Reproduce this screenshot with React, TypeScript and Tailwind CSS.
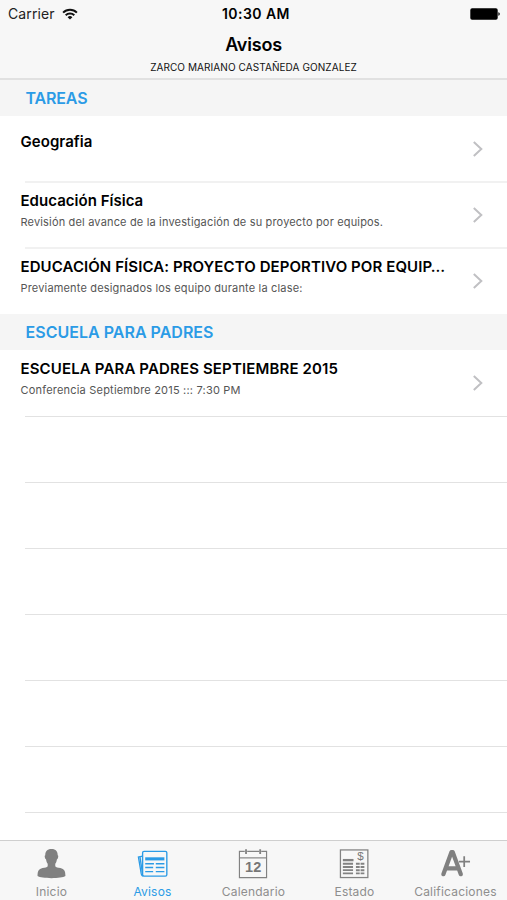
import React from 'react';

interface Notice {
  id: string;
  title: string;
  detail?: string;
  titleClass: string;
  detailClass?: string;
}

interface NoticeSection {
  id: string;
  name: string;
  nameClass: string;
  notices: Notice[];
}

const SECTIONS: NoticeSection[] = [
  {
    id: 'tareas',
    name: 'TAREAS',
    nameClass: 'tracking-[-0.15px]',
    notices: [
      { id: 'geografia', title: 'Geografia', titleClass: 'tracking-[0.05px]' },
      {
        id: 'educacion',
        title: 'Educación Física',
        titleClass: 'tracking-[0.03px]',
        detail: 'Revisión del avance de la investigación de su proyecto por equipos.',
        detailClass: 'tracking-[0.165px]'
      },
      {
        id: 'proyecto',
        title: 'EDUCACIÓN FÍSICA: PROYECTO DEPORTIVO POR EQUIP…',
        titleClass: 'tracking-[0.085px]',
        detail: 'Previamente designados los equipo durante la clase:',
        detailClass: 'tracking-[0.17px]'
      }
    ]
  },
  {
    id: 'escuela',
    name: 'ESCUELA PARA PADRES',
    nameClass: 'tracking-[0.02px]',
    notices: [
      {
        id: 'septiembre',
        title: 'ESCUELA PARA PADRES SEPTIEMBRE 2015',
        titleClass: 'tracking-[0.14px]',
        detail: 'Conferencia Septiembre 2015 ::: 7:30 PM',
        detailClass: 'tracking-[0.2px]'
      }
    ]
  }
];

const EMPTY_ROWS = [1, 2, 3, 4, 5, 6];

const WifiIcon = () => (
  <svg className="w-4 h-3" viewBox="0 0 16 12" fill="none" stroke="#111" strokeWidth="2">
    <path d="M1.1 4.6a9.8 9.8 0 0 1 13.8 0" />
    <path d="M3.7 7.3a6.1 6.1 0 0 1 8.6 0" />
    <path d="M8 11.6 5.6 9.2a3.4 3.4 0 0 1 4.8 0z" fill="#111" stroke="none" />
  </svg>
);

const BatteryIcon = () => (
  <svg className="w-[30px] h-3" viewBox="0 0 30 12">
    <rect x="0.3" y="0.3" width="27.4" height="11.4" rx="1.8" fill="#000" />
    <path d="M28.4 4.2c1.8.5 1.8 3.1 0 3.6z" fill="#000" />
  </svg>
);

const Chevron = () => (
  <svg className="w-[11px] h-4 mb-px shrink-0" viewBox="0 0 11 16" fill="none" stroke="#c0c0c3" strokeWidth="2">
    <path d="M1.8 1 9.300 8l-7.500 7" />
  </svg>
);

const PersonIcon = () => (
  <svg className="w-8 h-8" viewBox="0 0 32 32" fill="#808080">
    <path d="M16.500 1c-4.600 0-6.500 2.600-6.400 6.500-.7.3-.7 1.300-.4 2.400.2 1 .6 1.700 1.200 1.900.3 1.800.8 3.300 1.700 4.400v2.600c-.8 1.200-2.600 1.300-5.300 1.800-4.100.9-5.200 3.200-5.200 8.400 2.200 1.500 7.700 2.200 14.400 2.200s12.200-.7 14.400-2.200c0-5.200-1.100-7.500-5.200-8.400-2.700-.5-4.500-.6-5.300-1.800v-2.600c.9-1.100 1.400-2.600 1.700-4.400.6-.2 1-.9 1.200-1.900.3-1.100.3-2.100-.4-2.400C23 3.600 21.100 1 16.500 1z" />
  </svg>
);

const NewsIcon = () => (
  <svg className="w-8 h-8" viewBox="0 0 32 32" fill="none" stroke="#2b9be6">
    <rect x="6.300" y="3.500" width="25" height="25.500" rx="1.500" strokeWidth="1.400" />
    <path d="M6.300 8.300 2 9.300l2.900 17.200c.3 1.500 1 2.500 2.200 2.500" strokeWidth="1.400" />
    <path d="M3.600 9.500 6 25" strokeWidth="1.400" />
    <path d="M9 11.200h19.800" strokeWidth="3.200" />
    <path d="M9 16.200h9M19.900 16.200h8.900M9 20.200h8.200M19.900 20.200h8.900M9 24.400h8.200M19.900 24.400h8.900" strokeWidth="1.500" />
  </svg>
);

const CalendarIcon = () => (
  <svg className="w-8 h-8" viewBox="0 0 32 32" fill="none" stroke="#828282">
    <path d="M7.500 3.500H2v27h28v-27h-5.500M10 3.500h12.500" strokeWidth="1.200" />
    <path d="M2 10.200h28" strokeWidth="1.200" />
    <path d="M8.800 1.200v5M23.400 1.200v5" strokeWidth="1.900" />
    <text
      x="16.200"
      y="25"
      textAnchor="middle"
      fill="#777"
      stroke="none"
      className="font-['Liberation_Sans',sans-serif] text-[15px] font-bold"
    >
      12
    </text>
  </svg>
);

const InvoiceIcon = () => (
  <svg className="w-8 h-8" viewBox="0 0 32 32" fill="none" stroke="#828282">
    <rect x="2" y="2" width="28.300" height="28.500" strokeWidth="1.300" />
    <path d="M4.500 12.500h11" strokeWidth="2.400" />
    <path d="M4.500 16.300h10.500M4.500 19.600h10.500M4.500 22.900h10.500M4.500 26.200h10.500" strokeWidth="1.900" />
    <path d="M18 16.300h8.700M18 19.600h8.700M18 22.900h8.700M18 26.200h8.700" strokeWidth="2" strokeDasharray="3.900 .9" />
    <text
      x="22.700"
      y="12.500"
      textAnchor="middle"
      fill="#777"
      stroke="none"
      className="font-['Liberation_Sans',sans-serif] text-[12px]"
    >
      $
    </text>
  </svg>
);

const GradeIcon = () => (
  <svg className="w-8 h-8" viewBox="0 0 32 32" fill="none" stroke="#808080" strokeLinecap="round" strokeLinejoin="round">
    <path d="M4 27 12.400 4.200h1.200L22 27M7.500 21h11" strokeWidth="4.400" />
    <path d="M20 14h11.500M25.500 8.500v11" strokeWidth="1.800" strokeLinecap="butt" />
  </svg>
);

const TABS = [
  { id: 'inicio', label: 'Inicio', Icon: PersonIcon },
  { id: 'avisos', label: 'Avisos', Icon: NewsIcon },
  { id: 'calendario', label: 'Calendario', Icon: CalendarIcon },
  { id: 'estado', label: 'Estado', Icon: InvoiceIcon },
  { id: 'calificaciones', label: 'Calificaciones', Icon: GradeIcon }
];

const NoticeRow: React.FC<{ notice: Notice }> = ({ notice }) => (
  <div className="h-[66px] flex items-center justify-between pl-[20.5px] pr-6">
    <div className={`whitespace-nowrap ${notice.detail ? 'pb-[7px]' : 'pb-3.5'}`}>
      <h3 className={`text-[15px] leading-5 font-semibold text-black ${notice.titleClass}`}>{notice.title}</h3>
      {notice.detail && (
        <p className={`mt-px text-[11px] leading-5 text-[#555] ${notice.detailClass}`}>{notice.detail}</p>
      )}
    </div>
    <Chevron />
  </div>
);

export default function App() {
  const activeTab = 'avisos';

  return (
    <div className="h-[900px] w-[507px] flex flex-col overflow-hidden bg-white font-['Inter',sans-serif]">
      {/* Status bar + title */}
      <header className="h-20 shrink-0 bg-[#f7f7f7] border-b-2 border-[#e1e1e1]">
        <div className="h-[27px] grid grid-cols-3 items-center pl-2 pr-[7px]">
          <div className="flex items-center gap-[7px] text-[14px] text-[#222] tracking-[0.1px]">
            <span>Carrier</span>
            <WifiIcon />
          </div>
          <span className="pl-1 text-center text-[14px] font-semibold text-black tracking-[0.45px]">10:30 AM</span>
          <div className="flex justify-end">
            <BatteryIcon />
          </div>
        </div>
        <h1 className="mt-2 text-center text-[18px] leading-5 font-semibold text-black tracking-[-0.2px]">Avisos</h1>
        <p className="mt-1 text-center text-[10px] leading-4 text-[#111] tracking-[0.08px]">
          ZARCO MARIANO CASTAÑEDA GONZALEZ
        </p>
      </header>

      <main className="flex-1 min-h-0 overflow-hidden">
        {SECTIONS.map(section => (
          <section key={section.id}>
            <h2
              className={`h-9 flex items-center pl-[25.5px] bg-[#f5f5f5] text-[16px] font-semibold text-[#2b9be6] ${section.nameClass}`}
            >
              {section.name}
            </h2>
            {section.notices.map((notice, index) => (
              <React.Fragment key={notice.id}>
                {index > 0 && <div className="-my-px ml-[25px] h-0.5 bg-[#f1f1f1]" />}
                <NoticeRow notice={notice} />
              </React.Fragment>
            ))}
          </section>
        ))}

        {/* Unused table rows keep their separators */}
        <div className="ml-[25px]">
          {EMPTY_ROWS.map(row => (
            <div key={row} className="h-[66px] border-t border-[#e2e2e2]" />
          ))}
          <div className="border-t border-[#e2e2e2]" />
        </div>
      </main>

      {/* Tab bar */}
      <nav className="h-[60px] shrink-0 flex bg-[#f7f7f7] border-t border-[#cfcfcf] pr-0.5">
        {TABS.map(({ id, label, Icon }) => (
          <button key={id} className="flex-1 basis-0 min-w-0 flex flex-col items-center pt-[7px]">
            <Icon />
            <span
              className={`mt-[5px] pl-0.5 text-[12px] leading-4 tracking-[0.2px] ${id === activeTab ? 'text-[#2b9be6]' : 'text-[#8e8e8e]'}`}
            >
              {label}
            </span>
          </button>
        ))}
      </nav>
    </div>
  );
}
